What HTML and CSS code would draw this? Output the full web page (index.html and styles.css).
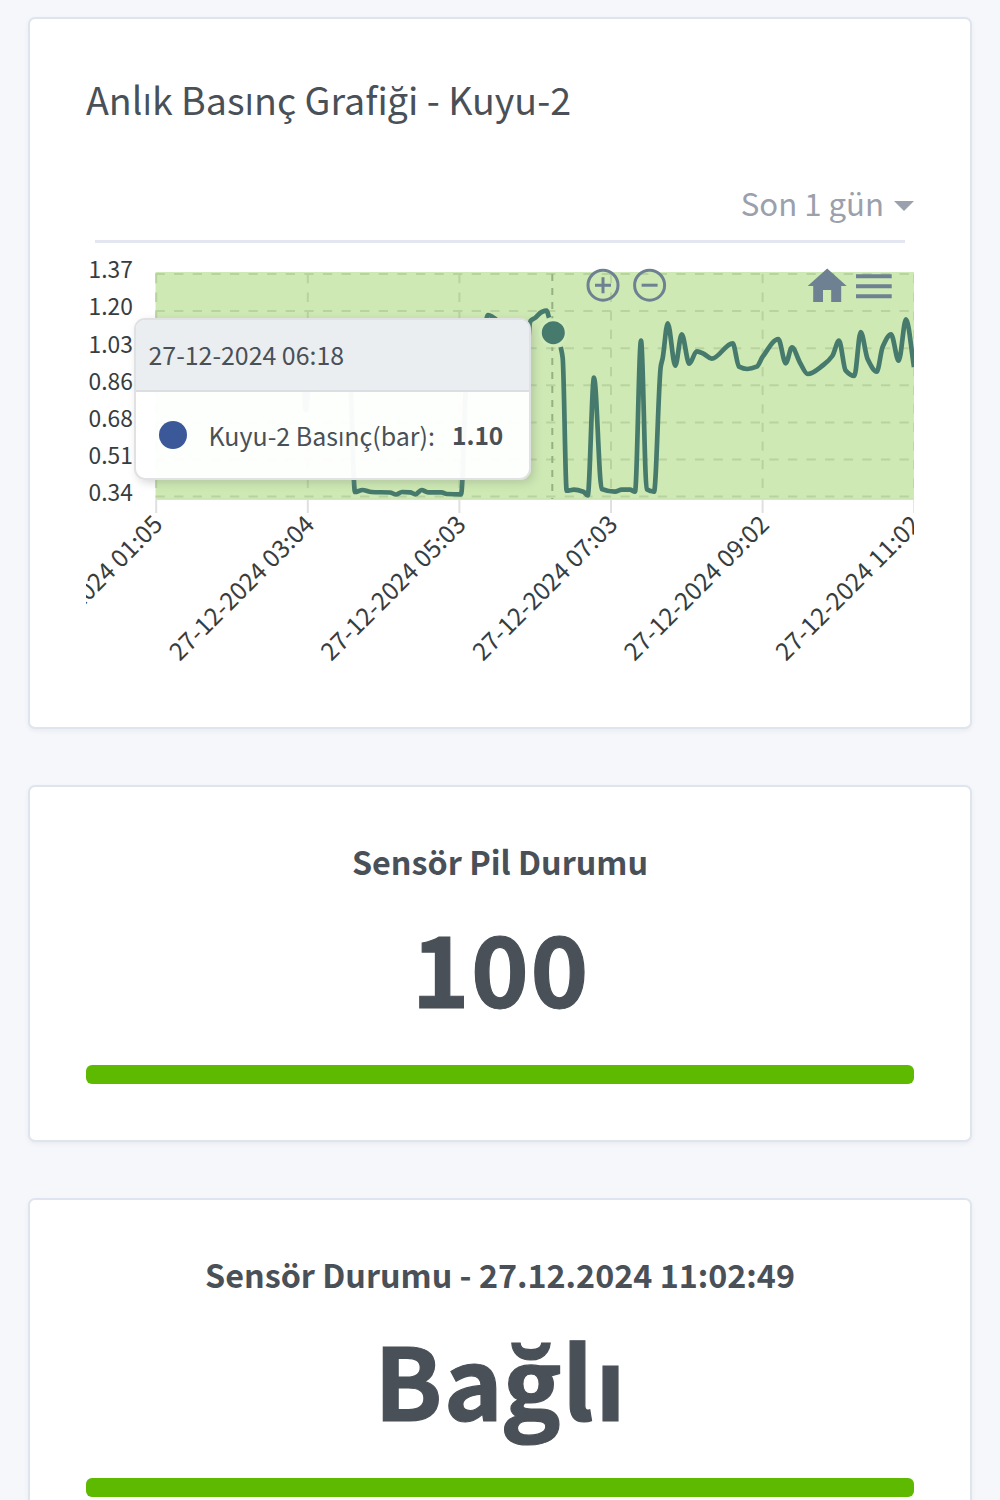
FILE: index.html
```html
<!DOCTYPE html>
<html lang="tr">
<head>
<meta charset="utf-8">
<title>Kuyu-2</title>
<link rel="stylesheet" href="styles.css">
</head>
<body>
<main class="page">
  <section class="card chart-card">
    <h3 class="card-title">Anlık Basınç Grafiği - Kuyu-2</h3>
    <div class="range"><span class="range-label">Son 1 gün</span><i class="caret"></i></div>
    <hr class="divider">
    <div class="chart">
      <svg class="plot" width="828" height="430" viewBox="86 248 828 430">
        <rect class="band" x="155.5" y="272" width="759" height="227"/>
        <g id="grid"></g>
        <path class="axis" d="M155.5 499.2H914"/>
        <path class="crosshair" d="M552.3 274V499"/>
        <path class="series" id="series"/>
        <circle class="marker" cx="553.3" cy="332.7" r="13"/>
        <g class="tools">
          <circle cx="603" cy="285.2" r="15"/><path d="M595 285.2H611M603 277.2V293.2"/>
          <circle cx="649.6" cy="285.2" r="15"/><path d="M641.6 285.2H657.6"/>
          <path class="burger" d="M856 276.2H891.7M856 286.2H891.7M856 296.2H891.7"/>
          <path class="home" d="M827.2 268.5L846.7 286H841.2V302H831.2V290H823V302H813.2V286H807.7Z"/>
        </g>
        <g id="labels"></g>
      </svg>
      <div class="tooltip">
        <div class="tooltip-head">27-12-2024 06:18</div>
        <div class="tooltip-body"><i class="dot"></i><span class="tooltip-name">Kuyu-2 Basınç(bar):</span><b class="tooltip-value">1.10</b></div>
      </div>
    </div>
  </section>
  <section class="card stat">
    <div class="stat-title">Sensör Pil Durumu</div>
    <div class="stat-value">100</div>
    <div class="bar"></div>
  </section>
  <section class="card stat">
    <div class="stat-title">Sensör Durumu - 27.12.2024 11:02:49</div>
    <div class="stat-value stat-word">Bağlı</div>
    <div class="bar"></div>
  </section>
</main>
<script src="script.js"></script>
</body>
</html>
```
FILE: styles.css
```css
* { box-sizing: border-box; }
html { overflow: hidden; }
body {
  margin: 0;
  height: 1500px;
  overflow: hidden;
  background: #f5f7fb;
  color: #495057;
  font-family: "Noto Sans CJK SC", "Open Sans", sans-serif;
}
.page { display: flex; flex-direction: column; gap: 56px; padding: 16.5px 28px 0; }
.card {
  flex: none;
  background: #fff;
  border: 2px solid #dfe5ee;
  border-radius: 7px;
  box-shadow: 0 2px 5px rgba(0, 0, 0, .05);
  padding: 0 56px;
}
.chart-card { height: 712px; padding-top: 55.5px; }
.card-title { margin: 0; font-size: 37.6px; line-height: 50px; font-weight: 400; white-space: nowrap; }
.range { display: flex; justify-content: flex-end; align-items: center; gap: 10px; margin-top: 59px; height: 40px; color: #9aa0ac; }
.range-label { font-size: 31.2px; line-height: 40px; }
.caret { border: 10.5px solid transparent; border-top-color: #9aa0ac; border-bottom: 0; margin-top: 6px; }
.divider { margin: 17px 9px 0; border: 0; height: 2.5px; background: #e3e6f1; }
.chart { position: relative; margin-top: 5.5px; height: 430px; }
.plot { display: block; }
.band { fill: #cee9b3; }
.grid-line { fill: none; stroke: #b8d3a0; stroke-width: 2; stroke-dasharray: 9.3 9.3; }
.tick, .axis { fill: none; stroke: #e0e0e0; stroke-width: 2; }
.axis { stroke: #c4d8b5; stroke-width: 1; }
.crosshair { stroke: #94b181; stroke-width: 2; stroke-dasharray: 7 7; }
.series { fill: none; stroke: #467a6d; stroke-width: 4.7; stroke-linecap: butt; stroke-linejoin: round; }
.marker { fill: #467a6d; stroke: #d2ebba; stroke-width: 3; }
.tools { fill: none; stroke: #6e8192; stroke-width: 3; }
.tools .burger { stroke-width: 4; }
.tools .home { fill: #6e8192; stroke: none; }
.label { font-size: 22.8px; fill: #373d3f; text-anchor: end; }
.date-label { font-size: 24.5px; }
.tooltip {
  position: absolute; left: 47.5px; top: 70px; width: 397px; height: 162px;
  border: 2px solid #e0e1e2; border-radius: 11px; overflow: hidden;
  background: rgba(255, 255, 255, .96);
  box-shadow: 3px 3px 9px rgba(120, 130, 120, .3);
}
.tooltip-head { height: 72px; padding: 1px 13px 0; border-bottom: 2px solid #dcdfe1; background: #ebeef1; font-size: 24.9px; line-height: 67px; }
.tooltip-body { display: flex; align-items: center; height: 86px; padding-left: 23px; font-size: 25px; line-height: 40px; white-space: nowrap; }
.dot { width: 28px; height: 28px; border-radius: 50%; background: #3b5998; }
.tooltip-name { margin-left: 22px; }
.tooltip-value { margin-left: 17px; font-size: 24.5px; }
.stat { height: 357px; padding-top: 54.5px; text-align: center; }
.stat-title { font-size: 32.3px; line-height: 40px; font-weight: 600; white-space: nowrap; }
.stat-value { margin-top: 24px; font-size: 98px; line-height: 120px; font-weight: 700; letter-spacing: 1.5px; text-indent: 1.5px; -webkit-text-stroke: 1.2px #495057; white-space: nowrap; }
.stat-word { font-size: 100px; }
.bar { margin-top: 40px; height: 19px; border-radius: 6px; background: #5eba00; }
```
FILE: script.js
```js
const NS = "http://www.w3.org/2000/svg";
const grid = document.getElementById("grid");
const labels = document.getElementById("labels");

function add(parent, tag, cls, attrs, text) {
  const el = document.createElementNS(NS, tag);
  el.setAttribute("class", cls);
  for (const k in attrs) el.setAttribute(k, attrs[k]);
  if (text) el.textContent = text;
  parent.appendChild(el);
}

["1.37", "1.20", "1.03", "0.86", "0.68", "0.51", "0.34"].forEach((t, i) => {
  const y = 274 + i * 37.1;
  add(grid, "path", "grid-line", { d: `M155.5 ${y}H914` });
  add(labels, "text", "label", { x: 132.8, y: y + 4.3 }, t);
});

["01:05", "03:04", "05:03", "07:03", "09:02", "11:02"].forEach((t, i) => {
  const x = 156.2 + i * 151.6;
  add(grid, "path", "grid-line", { d: `M${x} 274V497` });
  add(grid, "path", "tick", { d: `M${x} 500V513` });
  add(labels, "text", "label date-label", { x: x + 8, y: 526, transform: `rotate(-45 ${x + 8} 526)` }, "27-12-2024 " + t);
});

const before = [[300,370],[303,375],[306,410],[309,375],[312,360],[340,350],[349,352],[355,492],[362.5,490],[371.5,492],[390,492.5],[396,494.5],[402,492],[410,492.3],[415.5,494.3],[421.5,490],[428,492.3],[441.5,492.3],[446.7,494],[461,494.3],[468,350],[484,330],[488,315],[500,323],[526,360],[530.5,321],[535,318],[541.7,312],[546.7,310.7],[549,317.7]];
const after = [[560.7,347],[562.7,358],[566.7,490.7],[574,489.7],[583.3,491.7],[587.7,495.5],[594,377.7],[601.7,489],[615,491.7],[621.7,489.7],[630,489.7],[635,491.7],[641,340.7],[646.7,489.3],[654,491.7],[660.7,367],[662.7,358],[667.7,323.3],[675.3,365.7],[681.7,334.3],[689.3,363.7],[696.7,351.3],[704,354],[711.7,358.7],[732.7,343.3],[739,366.7],[747.3,369],[756.7,366.7],[762.7,356.7],[778.3,339],[785.7,363.3],[792,347.3],[800,362.7],[807.7,374],[823.3,365],[832.3,356],[839,340.7],[845.7,370.7],[854.3,376],[860.7,332],[867.7,359.3],[876.7,371.7],[882.7,346.7],[891,334.3],[898.7,360.7],[906,319.3],[914,367]];

// Monotone cubic interpolation through the samples.
function smooth(p) {
  const s = [];
  for (let i = 0; i < p.length - 1; i++) s.push((p[i + 1][1] - p[i][1]) / (p[i + 1][0] - p[i][0]));
  const m = p.map((_, i) => {
    if (i === 0) return s[0];
    if (i === p.length - 1) return s[i - 1];
    return s[i - 1] * s[i] <= 0 ? 0 : 2 * s[i - 1] * s[i] / (s[i - 1] + s[i]);
  });
  let d = `M${p[0]}`;
  for (let i = 0; i < p.length - 1; i++) {
    const h = (p[i + 1][0] - p[i][0]) / 3;
    d += `C${p[i][0] + h} ${p[i][1] + m[i] * h} ${p[i + 1][0] - h} ${p[i + 1][1] - m[i + 1] * h} ${p[i + 1]}`;
  }
  return d;
}
document.getElementById("series").setAttribute("d", smooth(before) + smooth(after));
```
